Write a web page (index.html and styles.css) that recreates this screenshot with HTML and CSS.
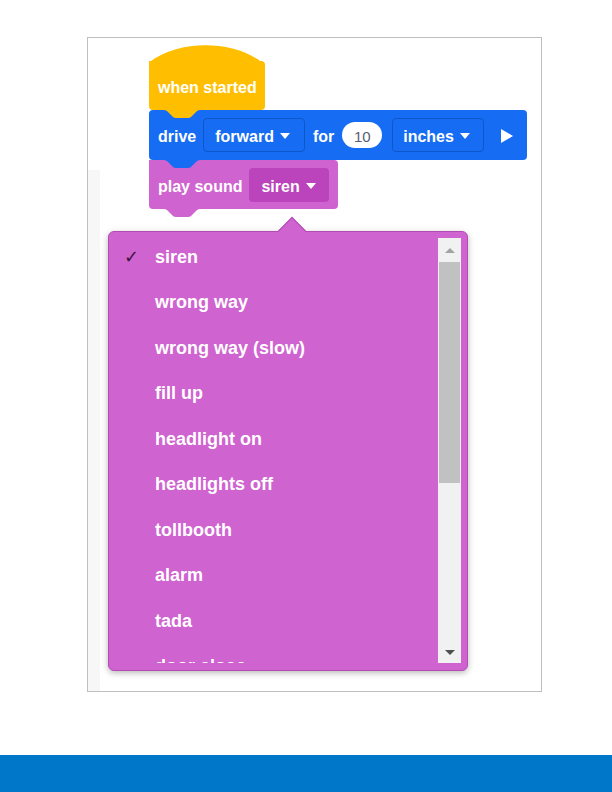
FILE: index.html
```html
<!DOCTYPE html>
<html>
<head>
<meta charset="utf-8">
<link rel="stylesheet" href="styles.css">
</head>
<body>
<div class="page">
  <div class="frame">
    <div class="strip"></div>
    <div class="workspace">
      <div class="stack">
        <div class="hat">
          <svg class="dome" width="113" height="17" viewBox="0 0 113 17"><path d="M0 17.5 C29 -5.5 84 -5.5 113 17.5 Z" fill="#FFBF00"/></svg>
          <div class="block events">
            <span class="label">when started</span>
            <svg class="tab" width="36" height="8" viewBox="0 0 36 8"><path d="M0 0 C2 0 3 1 4 2 L8 6 C9 7 10 8 12 8 H24 C26 8 27 7 28 6 L32 2 C33 1 34 0 36 0 Z" fill="#FFBF00"/></svg>
          </div>
        </div>
        <div class="block drive">
          <span class="label">drive</span>
          <span class="field field-forward"><span class="label">forward</span><span class="caret"></span></span>
          <span class="label label-for">for</span>
          <span class="oval">10</span>
          <span class="field field-inches"><span class="label">inches</span><span class="caret"></span></span>
          <span class="play"></span>
          <svg class="tab" width="36" height="8" viewBox="0 0 36 8"><path d="M0 0 C2 0 3 1 4 2 L8 6 C9 7 10 8 12 8 H24 C26 8 27 7 28 6 L32 2 C33 1 34 0 36 0 Z" fill="#166CF2"/></svg>
        </div>
        <div class="block sound">
          <span class="label">play sound</span>
          <span class="field field-siren"><span class="label">siren</span><span class="caret"></span></span>
          <svg class="tab" width="36" height="8" viewBox="0 0 36 8"><path d="M0 0 C2 0 3 1 4 2 L8 6 C9 7 10 8 12 8 H24 C26 8 27 7 28 6 L32 2 C33 1 34 0 36 0 Z" fill="#CF63CF"/></svg>
        </div>
      </div>
    </div>
    <div class="menu">
      <div class="pointer"></div>
      <ul class="list">
        <li class="item selected"><span class="check">✓</span><span class="text">siren</span></li>
        <li class="item"><span class="check"></span><span class="text">wrong way</span></li>
        <li class="item"><span class="check"></span><span class="text">wrong way (slow)</span></li>
        <li class="item"><span class="check"></span><span class="text">fill up</span></li>
        <li class="item"><span class="check"></span><span class="text">headlight on</span></li>
        <li class="item"><span class="check"></span><span class="text">headlights off</span></li>
        <li class="item"><span class="check"></span><span class="text">tollbooth</span></li>
        <li class="item"><span class="check"></span><span class="text">alarm</span></li>
        <li class="item"><span class="check"></span><span class="text">tada</span></li>
        <li class="item"><span class="check"></span><span class="text">door close</span></li>
      </ul>
      <div class="scrollbar">
        <div class="sb-btn sb-up"><span class="arrow-up"></span></div>
        <div class="sb-thumb"></div>
        <div class="sb-rest"></div>
        <div class="sb-btn sb-down"><span class="arrow-down"></span></div>
      </div>
    </div>
  </div>
  <div class="footer"></div>
</div>
</body>
</html>
```

FILE: styles.css
```css
* { box-sizing: border-box; }
html, body { margin: 0; padding: 0; background: #ffffff; }
body { font-family: "Liberation Sans", Arial, sans-serif; }

.page { width: 612px; height: 792px; padding-top: 37px; display: flex; flex-direction: column; }

.frame {
  position: relative;
  margin-left: 87px;
  width: 455px;
  height: 655px;
  border: 1px solid #bfbfbf;
  display: flex;
}

.strip {
  width: 12px;
  margin-top: 132px;
  background: #f7f7f7;
}

.workspace { flex: 1; padding: 7px 0 0 49px; }

.stack { display: flex; flex-direction: column; align-items: flex-start; }

.hat { display: flex; flex-direction: column; }
.dome { display: block; margin-bottom: -1px; }

.block {
  position: relative;
  display: flex;
  align-items: center;
  color: #ffffff;
  font-weight: bold;
  font-size: 16px;
  padding-left: 9px;
}
.label { white-space: nowrap; padding-top: 4px; }

.tab { position: absolute; left: 15px; bottom: -8px; z-index: 1; display: block; }

.events {
  width: 116px;
  height: 49px;
  background: #FFBF00;
  border-top-right-radius: 4px;
  border-bottom-left-radius: 4px;
  border-bottom-right-radius: 4px;
}

.drive {
  height: 50px;
  width: 378px;
  background: #166CF2;
  border-radius: 4px;
  padding-right: 14px;
}

.sound {
  height: 49px;
  width: 189px;
  background: #CF63CF;
  border-radius: 0 4px 4px 4px;
}

.field {
  display: flex;
  align-items: center;
  height: 34px;
  border-radius: 4px;
}
.caret {
  width: 0; height: 0;
  border-left: 5px solid transparent;
  border-right: 5px solid transparent;
  border-top: 6px solid #ffffff;
  margin-left: 6px;
  margin-top: 2px;
}

.field-forward, .field-inches {
  border: 1px solid #0f57c9;
  background: #166CF2;
}
.field-forward { width: 102px; margin-left: 7px; padding-left: 11px; }
.label-for { margin-left: 8px; }
.oval {
  width: 40px;
  height: 26px;
  margin-left: 8px;
  border-radius: 13px;
  background: #ffffff;
  color: #575e75;
  font-weight: normal;
  font-size: 15px;
  padding-top: 2px;
  display: flex;
  align-items: center;
  justify-content: center;
}
.field-inches { width: 92px; margin-left: 10px; padding-left: 10px; }
.play {
  width: 0; height: 0;
  border-left: 12px solid #ffffff;
  border-top: 7px solid transparent;
  border-bottom: 7px solid transparent;
  margin-left: 17px;
  margin-top: 2px;
}

.field-siren {
  width: 80px;
  margin-left: 7px;
  padding-left: 12px;
  background: #BB44BC;
}

.menu {
  position: absolute;
  left: 20px;
  top: 193px;
  width: 360px;
  height: 440px;
  background: #CF63CF;
  border: 1px solid #b44bb5;
  border-radius: 6px;
  box-shadow: 0 2px 6px rgba(0, 0, 0, 0.28);
  display: flex;
  align-items: flex-start;
}
.pointer {
  position: absolute;
  left: 173px;
  top: -11px;
  width: 20px;
  height: 20px;
  background: #CF63CF;
  border-top: 1px solid #b44bb5;
  border-left: 1px solid #b44bb5;
  transform: rotate(45deg);
}

.list {
  list-style: none;
  margin: 0;
  padding: 1px 0 0 0;
  flex: 1;
  height: 431px;
  overflow: hidden;
}
.item {
  height: 45.5px;
  display: flex;
  align-items: center;
  color: #ffffff;
  font-weight: bold;
  font-size: 18px;
}
.text { padding-top: 3px; }
.check {
  width: 46px;
  padding-left: 15px;
  padding-top: 2px;
  color: #3f1440;
  font-family: "DejaVu Sans", sans-serif;
  font-weight: bold;
  font-size: 18px;
  font-style: italic;
}

.scrollbar {
  width: 23px;
  height: 425px;
  margin: 6px 6px 0 0;
  background: #f1f1f1;
  display: flex;
  flex-direction: column;
}
.sb-btn { display: flex; align-items: center; justify-content: center; }
.sb-up { height: 24px; }
.sb-down { height: 22px; }
.sb-thumb { height: 221px; margin: 0 1px; background: #c1c1c1; }
.sb-rest { flex: 1; }
.arrow-up {
  width: 0; height: 0;
  border-left: 5px solid transparent;
  border-right: 5px solid transparent;
  border-bottom: 5px solid #a3a3a3;
}
.arrow-down {
  width: 0; height: 0;
  border-left: 5px solid transparent;
  border-right: 5px solid transparent;
  border-top: 5px solid #505050;
}

.footer {
  margin-top: 63px;
  height: 37px;
  background: #0077C8;
}
```
